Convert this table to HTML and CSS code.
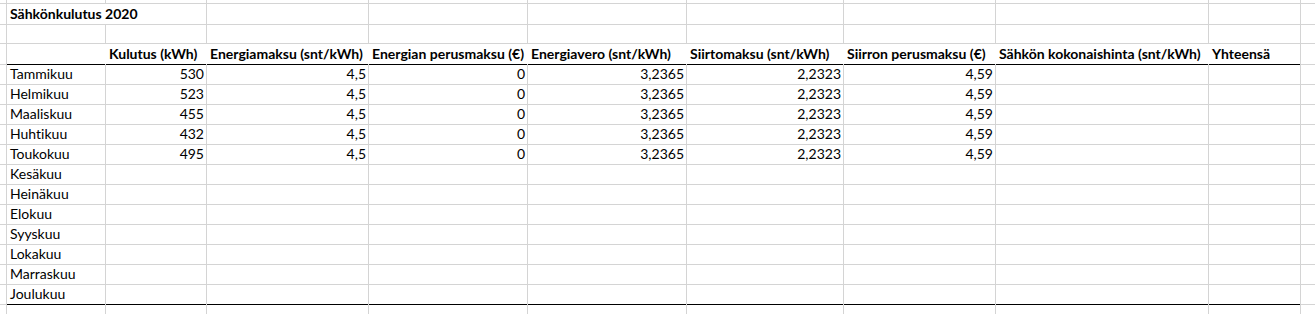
FILE: index.html
```html
<!DOCTYPE html>
<html lang="fi">
<head>
<meta charset="utf-8">
<title>Sähkönkulutus 2020</title>
<link rel="stylesheet" href="styles.css">
</head>
<body>
<div class="sheet">
  <div class="row top"><div class="c"></div><div class="c"></div><div class="c"></div><div class="c"></div><div class="c"></div><div class="c"></div><div class="c"></div><div class="c"></div><div class="c"></div><div class="c"></div><div class="c last"></div></div>
  <div class="row title"><div class="c"></div><div class="c t bold spill">Sähkönkulutus 2020</div><div class="c"></div><div class="c"></div><div class="c"></div><div class="c"></div><div class="c"></div><div class="c"></div><div class="c"></div><div class="c"></div><div class="c last"></div></div>
  <div class="row"><div class="c"></div><div class="c"></div><div class="c"></div><div class="c"></div><div class="c"></div><div class="c"></div><div class="c"></div><div class="c"></div><div class="c"></div><div class="c"></div><div class="c last"></div></div>
  <div class="row head"><div class="c"></div><div class="c h"></div><div class="c h">Kulutus (kWh)</div><div class="c h">Energiamaksu (snt/kWh)</div><div class="c h">Energian perusmaksu (€)</div><div class="c h">Energiavero (snt/kWh)</div><div class="c h">Siirtomaksu (snt/kWh)</div><div class="c h">Siirron perusmaksu (€)</div><div class="c h">Sähkön kokonaishinta (snt/kWh)</div><div class="c h edge">Yhteensä</div><div class="c last"></div></div>
  <div class="row"><div class="c"></div><div class="c t">Tammikuu</div><div class="c n">530</div><div class="c n">4,5</div><div class="c n">0</div><div class="c n">3,2365</div><div class="c n">2,2323</div><div class="c n">4,59</div><div class="c"></div><div class="c"></div><div class="c last"></div></div>
  <div class="row"><div class="c"></div><div class="c t">Helmikuu</div><div class="c n">523</div><div class="c n">4,5</div><div class="c n">0</div><div class="c n">3,2365</div><div class="c n">2,2323</div><div class="c n">4,59</div><div class="c"></div><div class="c"></div><div class="c last"></div></div>
  <div class="row"><div class="c"></div><div class="c t">Maaliskuu</div><div class="c n">455</div><div class="c n">4,5</div><div class="c n">0</div><div class="c n">3,2365</div><div class="c n">2,2323</div><div class="c n">4,59</div><div class="c"></div><div class="c"></div><div class="c last"></div></div>
  <div class="row"><div class="c"></div><div class="c t">Huhtikuu</div><div class="c n">432</div><div class="c n">4,5</div><div class="c n">0</div><div class="c n">3,2365</div><div class="c n">2,2323</div><div class="c n">4,59</div><div class="c"></div><div class="c"></div><div class="c last"></div></div>
  <div class="row"><div class="c"></div><div class="c t">Toukokuu</div><div class="c n">495</div><div class="c n">4,5</div><div class="c n">0</div><div class="c n">3,2365</div><div class="c n">2,2323</div><div class="c n">4,59</div><div class="c"></div><div class="c"></div><div class="c last"></div></div>
  <div class="row"><div class="c"></div><div class="c t">Kesäkuu</div><div class="c"></div><div class="c"></div><div class="c"></div><div class="c"></div><div class="c"></div><div class="c"></div><div class="c"></div><div class="c"></div><div class="c last"></div></div>
  <div class="row"><div class="c"></div><div class="c t">Heinäkuu</div><div class="c"></div><div class="c"></div><div class="c"></div><div class="c"></div><div class="c"></div><div class="c"></div><div class="c"></div><div class="c"></div><div class="c last"></div></div>
  <div class="row"><div class="c"></div><div class="c t">Elokuu</div><div class="c"></div><div class="c"></div><div class="c"></div><div class="c"></div><div class="c"></div><div class="c"></div><div class="c"></div><div class="c"></div><div class="c last"></div></div>
  <div class="row"><div class="c"></div><div class="c t">Syyskuu</div><div class="c"></div><div class="c"></div><div class="c"></div><div class="c"></div><div class="c"></div><div class="c"></div><div class="c"></div><div class="c"></div><div class="c last"></div></div>
  <div class="row"><div class="c"></div><div class="c t">Lokakuu</div><div class="c"></div><div class="c"></div><div class="c"></div><div class="c"></div><div class="c"></div><div class="c"></div><div class="c"></div><div class="c"></div><div class="c last"></div></div>
  <div class="row"><div class="c"></div><div class="c t">Marraskuu</div><div class="c"></div><div class="c"></div><div class="c"></div><div class="c"></div><div class="c"></div><div class="c"></div><div class="c"></div><div class="c"></div><div class="c last"></div></div>
  <div class="row end"><div class="c"></div><div class="c t">Joulukuu</div><div class="c"></div><div class="c"></div><div class="c"></div><div class="c"></div><div class="c"></div><div class="c"></div><div class="c"></div><div class="c"></div><div class="c last"></div></div>
  <div class="row"><div class="c"></div><div class="c"></div><div class="c"></div><div class="c"></div><div class="c"></div><div class="c"></div><div class="c"></div><div class="c"></div><div class="c"></div><div class="c"></div><div class="c last"></div></div>
</div>
</body>
</html>
```

FILE: styles.css
```css
html, body {
  margin: 0;
  padding: 0;
  background: #ffffff;
}

body {
  font-family: Lato, "Liberation Sans", sans-serif;
  font-size: 14px;
  font-variant-ligatures: none;
  color: #000000;
  overflow: hidden;
}

.sheet {
  display: flex;
  flex-direction: column;
  width: 1315px;
}

.row {
  display: grid;
  grid-template-columns: 7px 99px 101px 162px 159px 159px 157px 152px 213px 92px 1fr;
  height: 20px;
}

.row.top {
  height: 4px;
}

.c {
  box-sizing: border-box;
  border-right: 1px solid #d4d4d4;
  border-bottom: 1px solid #d4d4d4;
  padding: 0 2px 0 3px;
  line-height: 20px;
  white-space: nowrap;
  overflow: visible;
  min-width: 0;
}

.c.last {
  border-right: none;
}

.t {
  text-align: left;
}

.n {
  text-align: right;
}

.bold,
.h {
  font-weight: 700;
}

.spill {
  border-right-color: transparent;
  position: relative;
  z-index: 1;
}

.head .h {
  border-right-color: #ffffff;
  border-bottom: 1px solid #000000;
}

.head .h.edge {
  border-right-color: #d4d4d4;
}

.end .c:not(:first-child):not(.last) {
  border-bottom: 1px solid #000000;
}
```
